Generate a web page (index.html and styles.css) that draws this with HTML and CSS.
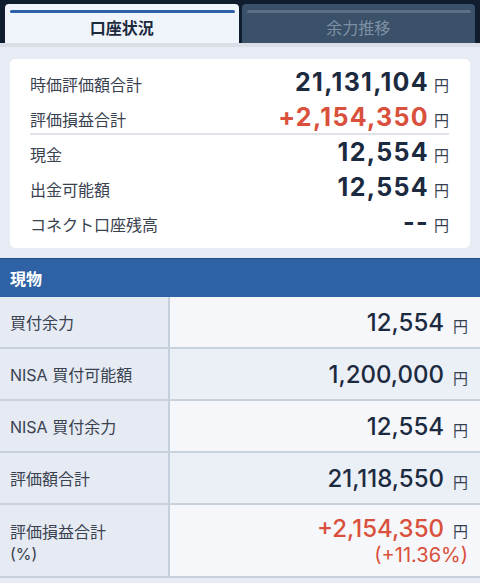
FILE: index.html
```html
<!DOCTYPE html>
<html lang="ja">
<head>
<meta charset="utf-8">
<link rel="stylesheet" href="styles.css">
</head>
<body>
<div class="tabs">
  <div class="tab tab-active"><span class="ind"></span><span class="tab-label">口座状況</span></div>
  <div class="tab tab-idle"><span class="ind"></span><span class="tab-label">余力推移</span></div>
</div>
<div class="strip"></div>
<div class="card">
  <div class="row"><span class="lbl">時価評価額合計</span><span class="num">21,131,104</span><span class="yen">円</span></div>
  <div class="row row-div"><span class="lbl">評価損益合計</span><span class="num red">+2,154,350</span><span class="yen">円</span></div>
  <div class="row"><span class="lbl">現金</span><span class="num">12,554</span><span class="yen">円</span></div>
  <div class="row"><span class="lbl">出金可能額</span><span class="num">12,554</span><span class="yen">円</span></div>
  <div class="row"><span class="lbl">コネクト口座残高</span><span class="num dash">--</span><span class="yen">円</span></div>
</div>
<div class="section-head">現物</div>
<div class="table">
  <div class="trow">
    <div class="tlbl">買付余力</div>
    <div class="tval light"><span class="tnum">12,554</span><span class="tyen">円</span></div>
  </div>
  <div class="trow">
    <div class="tlbl">NISA 買付可能額</div>
    <div class="tval"><span class="tnum">1,200,000</span><span class="tyen">円</span></div>
  </div>
  <div class="trow">
    <div class="tlbl">NISA 買付余力</div>
    <div class="tval light"><span class="tnum">12,554</span><span class="tyen">円</span></div>
  </div>
  <div class="trow">
    <div class="tlbl">評価額合計</div>
    <div class="tval"><span class="tnum">21,118,550</span><span class="tyen">円</span></div>
  </div>
  <div class="trow trow-tall">
    <div class="tlbl tlbl-multi">評価損益合計<br>(%)</div>
    <div class="tval light tval-multi">
      <div class="tline"><span class="tnum red">+2,154,350</span><span class="tyen">円</span></div>
      <div class="tpct">(+11.36%)</div>
    </div>
  </div>
</div>
</body>
</html>
```
FILE: styles.css
```css
html, body {
  margin: 0;
  padding: 0;
}
body {
  width: 480px;
  height: 583px;
  overflow: hidden;
  background: #e7ebf3;
  font-family: "Inter", "Noto Sans CJK JP", sans-serif;
  color: #3a4250;
}
.tabs {
  display: flex;
  gap: 3px;
  height: 43px;
  padding: 4px 5px 0;
  box-sizing: border-box;
  background: #0f1d2f;
}
.tab {
  flex: 1;
  display: flex;
  flex-direction: column;
  align-items: stretch;
  border-radius: 4px 4px 0 0;
}
.tab-active {
  background: #f0f4fb;
}
.tab-idle {
  background: #3a5169;
}
.ind {
  display: block;
  height: 3px;
  margin: 6px 4px 0 5px;
  border-radius: 2px;
}
.tab-active .ind {
  background: #2d62a8;
}
.tab-idle .ind {
  background: #5b7086;
}
.tab-label {
  text-align: center;
  font-size: 16px;
  line-height: 16px;
  margin-top: 6px;
  font-family: "Noto Sans CJK JP", sans-serif;
}
.tab-active .tab-label {
  font-weight: 700;
  color: #1c2a3e;
}
.tab-idle .tab-label {
  color: #7e91a4;
}
.strip {
  height: 4px;
  background: #dadfe7;
}
.card {
  margin: 12px 10px 0;
  padding: 6px 21px 8px 20px;
  background: #ffffff;
  border-radius: 5px;
}
.row {
  display: flex;
  align-items: baseline;
  height: 35px;
  line-height: 35px;
}
.row-div {
  border-bottom: 2px solid #dfe2e7;
  height: 33px;
}
.lbl {
  flex: 1;
  font-size: 16px;
  font-family: "Noto Sans CJK JP", sans-serif;
  color: #3a4250;
}
.num {
  font-size: 25px;
  font-weight: 700;
  color: #1b2a3f;
  letter-spacing: 1.3px;
}
.red {
  color: #d9503c;
}
.yen {
  font-size: 15px;
  margin-left: 5px;
  color: #34404f;
  font-family: "Noto Sans CJK JP", sans-serif;
}
.section-head {
  margin-top: 10px;
  height: 39px;
  box-sizing: border-box;
  border-top: 1px solid #24508a;
  background: #2f62a4;
  color: #ffffff;
  font-weight: 700;
  font-size: 16px;
  font-family: "Noto Sans CJK JP", sans-serif;
  line-height: 38px;
  padding-left: 10px;
}
.trow {
  display: grid;
  grid-template-columns: 170px 1fr;
  height: 52px;
  box-sizing: border-box;
  border-bottom: 2px solid #c9d1dc;
}
.trow-tall {
  height: 73px;
}
.tlbl {
  display: flex;
  align-items: center;
  padding-left: 10px;
  background: #e5eaf3;
  border-right: 2px solid #c5cfdb;
  font-size: 16px;
  color: #3a4250;
}
.tlbl-multi {
  line-height: 22px;
  padding-top: 4px;
}
.tval {
  display: flex;
  justify-content: flex-end;
  align-items: center;
  padding-right: 12px;
  background: #ebeff6;
}
.tval.light {
  background: #f6f7fa;
}
.tval-multi {
  flex-direction: column;
  align-items: flex-end;
  justify-content: center;
}
.tline {
  display: flex;
  align-items: baseline;
}
.tval > .tnum, .tline > .tnum {
  font-size: 24px;
  font-weight: 500;
  color: #1b2a3f;
}
.tline > .tnum.red {
  color: #d9503c;
}
.tval > .tnum + .tyen {
  align-self: center;
  margin-top: 6px;
}
.tyen {
  font-size: 15px;
  margin-left: 9px;
  color: #34404f;
  font-family: "Noto Sans CJK JP", sans-serif;
}
.tpct {
  font-size: 20px;
  color: #d9503c;
  line-height: 24px;
}
```
